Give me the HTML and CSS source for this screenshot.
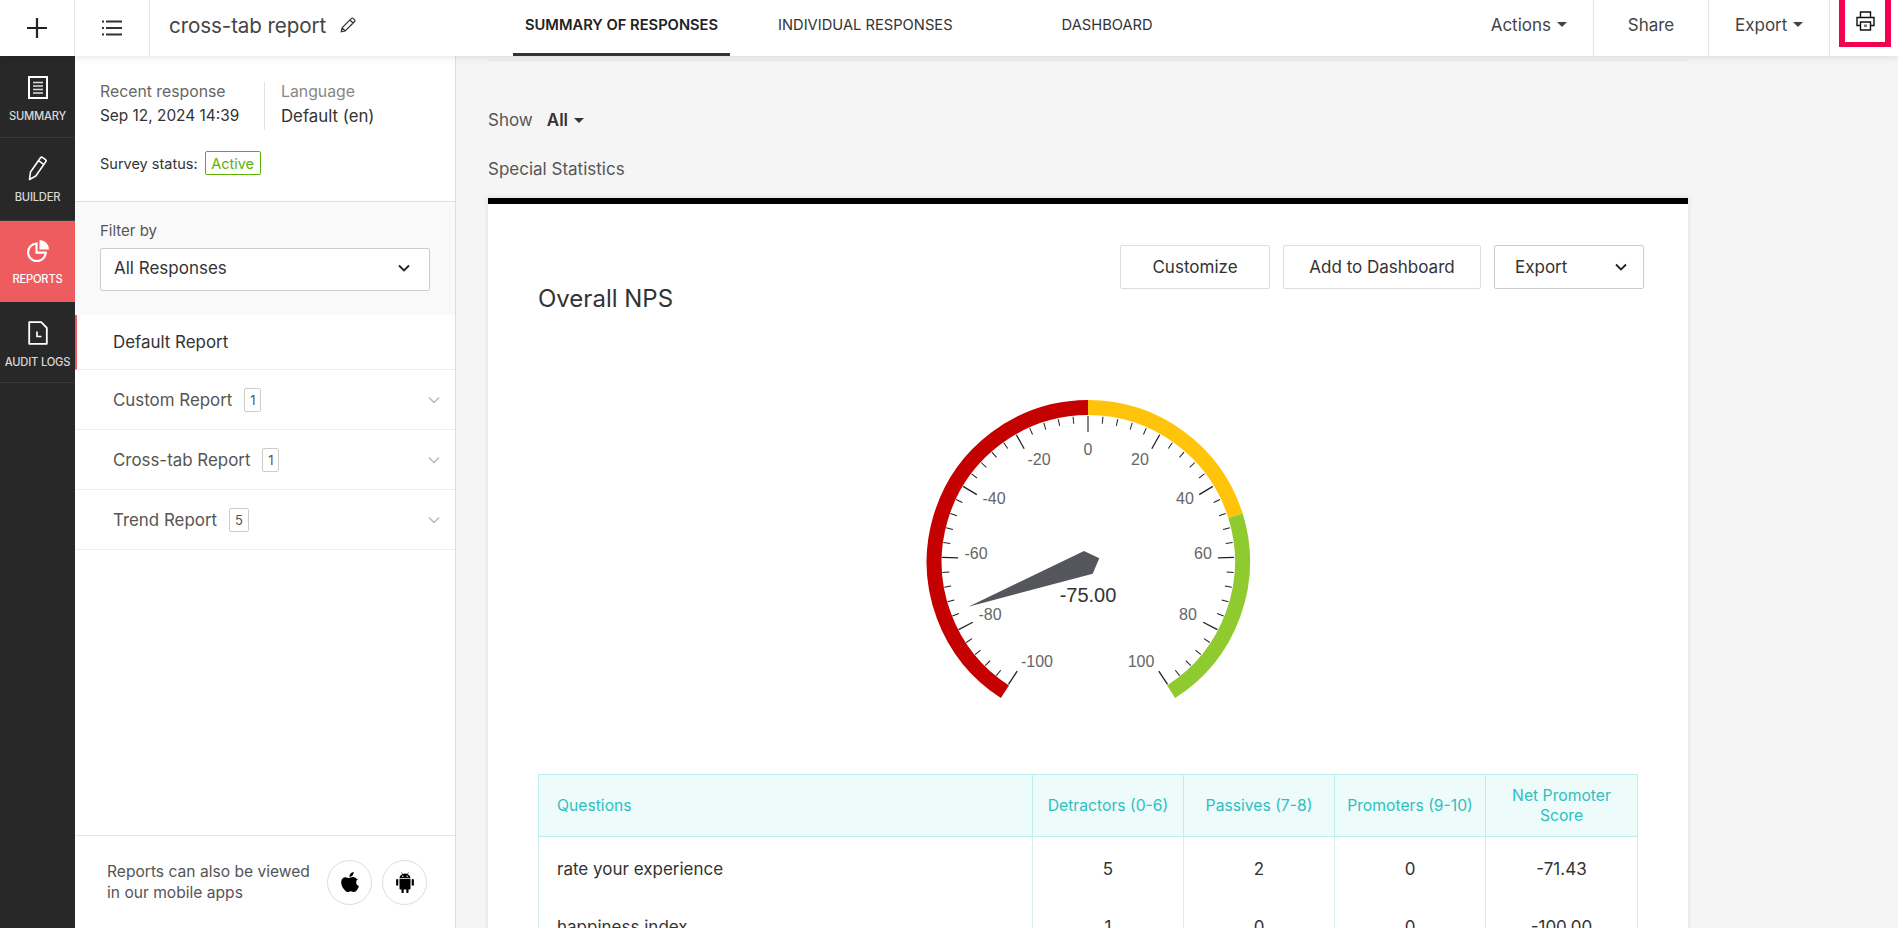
FILE: index.html
```html
<!DOCTYPE html>
<html lang="en">
<head>
<meta charset="utf-8">
<title>cross-tab report</title>
<link rel="stylesheet" href="styles.css">
</head>
<body>
<header class="topbar">
  <div class="top-cell"><svg class="ico" width="22" height="22" viewBox="0 0 22 22"><path d="M11 1v20M1 11h20" stroke="#222" stroke-width="2.2" fill="none"/></svg></div>
  <div class="top-cell"><svg class="ico" width="22" height="18" viewBox="0 0 22 18"><path d="M5 2.5h16M5 9h16M5 15.5h16" stroke="#333" stroke-width="2" fill="none"/><path d="M1 1.5h2v2H1zM1 8h2v2H1zM1 14.5h2v2H1z" fill="#333"/></svg></div>
  <div class="title-wrap">
    <span class="title">cross-tab report</span>
    <svg class="ico" width="16" height="16" viewBox="0 0 16 16"><path d="M1.2 14.8l.9-4L11.5 1.4a1.2 1.2 0 0 1 1.7 0l1.4 1.4a1.2 1.2 0 0 1 0 1.7L5.200 13.900zM2.100 10.800l3.100 3.100M10 3l3 3" stroke="#333" stroke-width="1.2" fill="none"/></svg>
  </div>
  <nav class="tabs">
    <a class="tab tab-active">SUMMARY OF RESPONSES</a>
    <a class="tab tab-individual">INDIVIDUAL RESPONSES</a>
    <a class="tab tab-dashboard">DASHBOARD</a>
  </nav>
  <div class="actions">
    <div class="act act-actions">Actions<i class="caret"></i></div>
    <div class="act act-share">Share</div>
    <div class="act act-export">Export<i class="caret"></i></div>
    <div class="act-print">
      <div class="print-box">
        <svg width="19" height="20" viewBox="0 0 19 20"><path d="M4.500 6.500V1h10v5.500M1 6.500h17M4.500 14.500H1v-8h17v8h-3.500" stroke="#111" stroke-width="1.400" fill="none"/><path d="M4.500 11h10v8h-10z" stroke="#111" stroke-width="1.400" fill="#fff"/><path d="M8 13.500h3v2.500H8z" fill="#777"/></svg>
      </div>
    </div>
  </div>
</header>

<div class="body-row">
  <aside class="rail">
    <div class="rail-item rail-summary">
      <svg width="20" height="23" viewBox="0 0 20 23"><path d="M1 1h18v21H1z" stroke="#fff" stroke-width="2" fill="none"/><path d="M5 6.500h10M5 10h10M5 13.500h10M5 17h10" stroke="#ddd" stroke-width="1.400"/></svg>
      <span>SUMMARY</span>
    </div>
    <div class="rail-item rail-builder">
      <svg width="20" height="25" viewBox="0 0 20 25"><path d="M1.500 23.500l1-7.500L12.500 1.800a1.500 1.500 0 0 1 2-.3l3 2.100a1.500 1.500 0 0 1 .3 2L7.800 20zM10.800 4.800l5.300 3.800" stroke="#fff" stroke-width="1.600" fill="none" stroke-linejoin="round"/></svg>
      <span>BUILDER</span>
    </div>
    <div class="rail-item rail-active">
      <svg width="22" height="22" viewBox="0 0 22 22"><path d="M9.500 3.500a8.800 8.800 0 1 0 9.200 9.200H9.500z" stroke="#fff" stroke-width="2.200" fill="none"/><path d="M12.500 0a9.500 9.500 0 0 1 9.500 9.500h-9.500z" fill="#fff"/></svg>
      <span>REPORTS</span>
    </div>
    <div class="rail-item rail-audit">
      <svg width="20" height="24" viewBox="0 0 20 24"><path d="M1.200 1.200h12l5.600 5.600v16h-17.600z" stroke="#fff" stroke-width="1.800" fill="none" stroke-linejoin="round"/><path d="M9 10.500v5h4.500" stroke="#fff" stroke-width="1.700" fill="none"/></svg>
      <span>AUDIT LOGS</span>
    </div>
  </aside>

  <aside class="panel">
    <div class="meta">
      <div class="meta-row">
        <div class="meta-col meta-col-a"><div class="meta-k">Recent response</div><div class="meta-v">Sep 12, 2024 14:39</div></div>
        <div class="meta-col meta-col-b"><div class="meta-k meta-k-light">Language</div><div class="meta-v meta-v-big">Default (en)</div></div>
      </div>
      <div class="status"><span>Survey status:</span><span class="badge-active">Active</span></div>
    </div>
    <div class="filter">
      <div class="filter-label">Filter by</div>
      <div class="select"><span>All Responses</span><svg width="12" height="8" viewBox="0 0 12 8"><path d="M1 1.500l5 5 5-5" stroke="#222" stroke-width="1.800" fill="none"/></svg></div>
    </div>
    <div class="report report-default">Default Report</div>
    <div class="report"><span>Custom Report</span><span class="count">1</span><svg class="chev" width="12" height="8" viewBox="0 0 12 8"><path d="M1 1.500l5 5 5-5" stroke="#b4b9b9" stroke-width="1.400" fill="none"/></svg></div>
    <div class="report"><span>Cross-tab Report</span><span class="count">1</span><svg class="chev" width="12" height="8" viewBox="0 0 12 8"><path d="M1 1.500l5 5 5-5" stroke="#b4b9b9" stroke-width="1.400" fill="none"/></svg></div>
    <div class="report"><span>Trend Report</span><span class="count count-wide">5</span><svg class="chev" width="12" height="8" viewBox="0 0 12 8"><path d="M1 1.500l5 5 5-5" stroke="#b4b9b9" stroke-width="1.400" fill="none"/></svg></div>
    <div class="apps">
      <p class="apps-text">Reports can also be viewed<br>in our mobile apps</p>
      <div class="app-circle"><svg width="18" height="20" viewBox="0 0 18 20"><path d="M12.600 0c.1 1.300-.4 2.500-1.100 3.400-.8.900-2 1.500-3.100 1.400-.1-1.200.5-2.500 1.200-3.300C10.300.7 11.600.1 12.600 0zM17.400 6.700c-1.600 1-2.300 2.200-2.200 3.700.1 1.800 1 3 2.800 3.700-.5 1.400-1.100 2.700-2 3.900-.8 1.100-1.700 2-2.900 2-1.200 0-1.800-.8-3.300-.8s-2.100.8-3.300.8c-1.300 0-2.300-1-3.100-2.200C1.300 15.600.2 12.700.2 10.200c0-3.200 2.100-5 4.300-5 1.300 0 2.500.9 3.400.9.800 0 2.200-1 3.700-1 1.500 0 3 .6 4 1.900z" fill="#000"/></svg></div>
      <div class="app-circle"><svg width="18" height="21" viewBox="0 0 18 21"><path d="M3.500 7h11v9.500a1 1 0 0 1-1 1h-1V20a1 1 0 0 1-2.200 0v-2.500H7.700V20a1 1 0 0 1-2.200 0v-2.500h-1a1 1 0 0 1-1-1zM1.200 7a1.100 1.100 0 0 1 1.100 1.100v4.600a1.100 1.100 0 0 1-2.200 0V8.100A1.100 1.100 0 0 1 1.200 7zM16.800 7a1.100 1.100 0 0 1 1.100 1.100v4.600a1.100 1.100 0 0 1-2.200 0V8.100A1.100 1.100 0 0 1 16.800 7zM3.500 6.300C3.600 4.400 4.700 2.900 6.300 2.200L5.300.600l.4-.3 1.100 1.700a6 6 0 0 1 4.400 0L12.300.300l.4.3-1 1.600c1.600.7 2.700 2.200 2.800 4.100z" fill="#000"/><circle cx="6.800" cy="4.300" r=".7" fill="#fff"/><circle cx="11.200" cy="4.300" r=".7" fill="#fff"/></svg></div>
    </div>
  </aside>

  <main class="main">
    <div class="edge"></div>
    <div class="show"><span class="show-k">Show</span><span class="show-v">All</span><i class="caret"></i></div>
    <div class="section-title">Special Statistics</div>
    <section class="card">
      <div class="card-head">
        <h2 class="card-title">Overall NPS</h2>
        <div class="btns">
          <div class="btn btn-custom">Customize</div>
          <div class="btn btn-dash">Add to Dashboard</div>
          <div class="btn btn-export"><span>Export</span><svg width="12" height="8" viewBox="0 0 12 8"><path d="M1 1.500l5 5 5-5" stroke="#222" stroke-width="1.800" fill="none"/></svg></div>
        </div>
      </div>
      <svg class="gauge" width="340" height="310" viewBox="-170 -170 340 310">
        <defs>
          <path id="tm" d="M0-146v7" stroke="#222" stroke-width="1"/>
          <path id="tj" d="M0-146v16" stroke="#222" stroke-width="1.300"/>
        </defs>
        <path d="M-83.100 129.800A154.500 154.500 0 0 1 0-154.500" stroke="#c40000" stroke-width="15" fill="none"/>
        <path d="M0-154.500A154.500 154.500 0 0 1 147.500-46.200" stroke="#ffc40a" stroke-width="15" fill="none"/>
        <path d="M147.500-46.200A154.500 154.500 0 0 1 83.100 129.800" stroke="#8fca2e" stroke-width="15" fill="none"/>
        <use href="#tj" transform="rotate(-147)"/><use href="#tm" transform="rotate(-141.120)"/><use href="#tm" transform="rotate(-135.240)"/><use href="#tm" transform="rotate(-129.360)"/><use href="#tm" transform="rotate(-123.480)"/>
        <use href="#tj" transform="rotate(-117.600)"/><use href="#tm" transform="rotate(-111.720)"/><use href="#tm" transform="rotate(-105.840)"/><use href="#tm" transform="rotate(-99.960)"/><use href="#tm" transform="rotate(-94.080)"/>
        <use href="#tj" transform="rotate(-88.200)"/><use href="#tm" transform="rotate(-82.320)"/><use href="#tm" transform="rotate(-76.440)"/><use href="#tm" transform="rotate(-70.560)"/><use href="#tm" transform="rotate(-64.680)"/>
        <use href="#tj" transform="rotate(-58.800)"/><use href="#tm" transform="rotate(-52.920)"/><use href="#tm" transform="rotate(-47.040)"/><use href="#tm" transform="rotate(-41.160)"/><use href="#tm" transform="rotate(-35.280)"/>
        <use href="#tj" transform="rotate(-29.400)"/><use href="#tm" transform="rotate(-23.520)"/><use href="#tm" transform="rotate(-17.640)"/><use href="#tm" transform="rotate(-11.760)"/><use href="#tm" transform="rotate(-5.880)"/>
        <path d="M0-146v16" stroke="#666" stroke-width="1.600"/>
        <use href="#tm" transform="rotate(5.880)"/><use href="#tm" transform="rotate(11.760)"/><use href="#tm" transform="rotate(17.640)"/><use href="#tm" transform="rotate(23.520)"/><use href="#tj" transform="rotate(29.400)"/>
        <use href="#tm" transform="rotate(35.280)"/><use href="#tm" transform="rotate(41.160)"/><use href="#tm" transform="rotate(47.040)"/><use href="#tm" transform="rotate(52.920)"/><use href="#tj" transform="rotate(58.800)"/>
        <use href="#tm" transform="rotate(64.680)"/><use href="#tm" transform="rotate(70.560)"/><use href="#tm" transform="rotate(76.440)"/><use href="#tm" transform="rotate(82.320)"/><use href="#tj" transform="rotate(88.200)"/>
        <use href="#tm" transform="rotate(94.080)"/><use href="#tm" transform="rotate(99.960)"/><use href="#tm" transform="rotate(105.840)"/><use href="#tm" transform="rotate(111.720)"/><use href="#tj" transform="rotate(117.600)"/>
        <use href="#tm" transform="rotate(123.480)"/><use href="#tm" transform="rotate(129.360)"/><use href="#tm" transform="rotate(135.240)"/><use href="#tm" transform="rotate(141.120)"/><use href="#tj" transform="rotate(147)"/>
        <g class="g-lab">
          <text x="-49" y="-97">-20</text><text x="0" y="-107">0</text><text x="52" y="-97">20</text>
          <text x="-94" y="-58">-40</text><text x="97" y="-58">40</text>
          <text x="-112" y="-3">-60</text><text x="115" y="-3">60</text>
          <text x="-98" y="58">-80</text><text x="100" y="58">80</text>
          <text x="-51" y="105">-100</text><text x="53" y="105">100</text>
        </g>
        <polygon points="-119.700,44.700 -4,-11 11.300,-3.700 4.700,11.700" fill="#55565b"/>
        <text class="g-val" x="0" y="40">-75.00</text>
      </svg>
      <table class="nps">
        <colgroup><col class="c-q"><col class="c-n"><col class="c-n"><col class="c-n"><col class="c-s"></colgroup>
        <thead>
          <tr><th class="q">Questions</th><th>Detractors (0-6)</th><th>Passives (7-8)</th><th>Promoters (9-10)</th><th>Net Promoter<br>Score</th></tr>
        </thead>
        <tbody>
          <tr class="r1"><td class="q">rate your experience</td><td>5</td><td>2</td><td>0</td><td>-71.43</td></tr>
          <tr class="r2"><td class="q">happiness index</td><td>1</td><td>0</td><td>0</td><td>-100.00</td></tr>
          <tr class="r3"><td class="q"></td><td></td><td></td><td></td><td></td></tr>
        </tbody>
      </table>
    </section>
  </main>
</div>
</body>
</html>
```
FILE: styles.css
```css
* { box-sizing: border-box; }
html, body { margin: 0; height: 100%; overflow: hidden; }
body { font-family: Inter, "Noto Sans", sans-serif; color: #333; display: flex; flex-direction: column; background: #f5f5f5; }
.ico { display: block; flex: none; }

.topbar { height: 56px; flex: none; background: #fff; display: flex; align-items: stretch; box-shadow: 0 2px 7px rgba(0,0,0,.09); position: relative; z-index: 2; }
.top-cell { width: 75px; border-right: 1px solid #e8e8e8; display: flex; align-items: center; justify-content: center; padding-bottom: 1px; }
.title-wrap { width: 363px; padding-left: 19px; display: flex; align-items: center; gap: 14px; padding-bottom: 6px; }
.title { font-size: 20.600px; color: #444; letter-spacing: -.1px; }
.tabs { display: flex; align-items: stretch; }
.tab { padding: 0 12px; font-size: 14.700px; line-height: 50px; color: #333; border-bottom: 3px solid transparent; }
.tab-active { font-weight: 600; border-bottom-color: #333; color: #222; }
.tab-individual { margin-left: 36px; }
.tab-dashboard { margin-left: 85px; }
.actions { margin-left: auto; display: flex; align-items: stretch; }
.act { display: flex; align-items: center; font-size: 17px; color: #444; border-right: 1px solid #e4e4e4; padding-bottom: 7px; }
.act-actions { padding-right: 26px; }
.act-share { width: 115px; justify-content: center; }
.act-export { width: 121px; padding-left: 26px; }
.caret { display: inline-block; width: 0; height: 0; border: 5px solid transparent; border-top-color: #444; border-bottom: 0; margin-left: 6px; }
.act-print { width: 68px; padding-left: 9px; }
.print-box { width: 52px; height: 47px; border: 6px solid #f5004f; border-top-width: 0; border-bottom-width: 5px; display: flex; align-items: center; justify-content: center; }

.body-row { flex: 1; display: flex; min-height: 0; }
.rail { width: 75px; flex: none; background: #282828; }
.rail-item { display: flex; flex-direction: column; align-items: center; border-bottom: 1px solid #3a3a3a; color: #d8d8d8; font-size: 11.200px; line-height: 14px; font-weight: 500; white-space: nowrap; letter-spacing: -.2px; }
.rail-summary { height: 82px; padding-top: 20px; gap: 10px; }
.rail-builder { height: 83px; padding-top: 18px; gap: 9px; }
.rail-active { height: 81px; padding-top: 19px; gap: 10px; background: #ee5c60; color: #fff; border-bottom: 0; }
.rail-audit { height: 81px; padding-top: 19px; gap: 10px; }

.panel { width: 381px; flex: none; background: #fff; border-right: 1px solid #ddd; display: flex; flex-direction: column; }
.meta { height: 146px; padding: 26px 0 0 25px; border-bottom: 1px solid #ddd; }
.meta-row { display: flex; }
.meta-col-a { width: 165px; border-right: 1px solid #e2e2e2; }
.meta-col-b { padding-left: 16px; }
.meta-k { font-size: 15.800px; color: #666; line-height: 20px; }
.meta-k-light { color: #888; }
.meta-v { font-size: 15.400px; color: #333; line-height: 28px; }
.meta-v-big { font-size: 16.800px; }
.status { margin-top: 21px; display: flex; align-items: center; gap: 7px; font-size: 14.500px; color: #333; }
.badge-active { border: 1px solid #59b300; color: #59b300; border-radius: 2px; height: 24px; width: 56px; display: flex; align-items: center; justify-content: center; }
.filter { height: 113px; background: #f9f9f9; padding: 19px 25px 0; }
.filter-label { font-size: 15px; color: #555; line-height: 20px; margin-bottom: 7px; }
.select { height: 43px; width: 330px; background: #fff; border: 1px solid #ccc; border-radius: 2px; padding: 0 19px 3px 13px; display: flex; align-items: center; justify-content: space-between; font-size: 17px; color: #333; }
.report { height: 60px; border-bottom: 1px solid #eee; padding: 0 15px 0 38px; display: flex; align-items: center; font-size: 16.900px; color: #555; }
.report-default { height: 55px; border-left: 2px solid #ee5c60; padding-left: 36px; color: #333; }
.count { margin-left: 12px; border: 1px solid #ccc; border-radius: 2px; font-size: 13px; min-width: 17px; height: 24px; display: flex; align-items: center; justify-content: center; padding: 0 3px; }
.count-wide { min-width: 20px; }
.chev { margin-left: auto; }
.apps { margin-top: auto; height: 93px; border-top: 1px solid #e6e6e6; display: flex; align-items: center; padding: 0 0 0 32px; }
.apps-text { margin: 0; font-size: 15.600px; line-height: 21px; color: #555; width: 220px; flex: none; }
.app-circle { width: 45px; height: 45px; border: 1px solid #ddd; border-radius: 50%; display: flex; align-items: center; justify-content: center; margin-right: 10px; flex: none; }

.main { flex: 1; min-width: 0; padding: 0 0 0 32px; }
.edge { height: 5px; background: #f2f2f2; border-bottom: 1px solid #ebebeb; width: 1200px; }
.show { margin-top: 49px; display: flex; align-items: center; font-size: 17px; line-height: 20px; color: #555; }
.show-v { margin-left: 14px; color: #333; font-weight: 600; }
.show .caret { margin-left: 6px; border-top-color: #333; }
.section-title { margin-top: 29px; font-size: 17px; line-height: 20px; color: #555; }
.card { width: 1200px; margin-top: 19px; background: #fff; border-top: 6px solid #000; box-shadow: 0 0 5px rgba(0,0,0,.1); padding: 0 50px; }
.card-head { display: flex; justify-content: space-between; height: 188px; padding-top: 41px; }
.card-title { margin: 39px 0 0; font-size: 24px; font-weight: 400; color: #333; line-height: 30px; }
.btns { display: flex; gap: 13px; margin-right: -6px; height: 44px; }
.btn { border: 1px solid #ddd; border-radius: 2px; display: flex; align-items: center; justify-content: center; font-size: 17px; color: #333; height: 44px; }
.btn-custom { width: 150px; }
.btn-dash { width: 198px; }
.btn-export { width: 150px; border-color: #ccc; justify-content: space-between; padding: 0 16px 0 20px; }
.gauge { display: block; margin: 0 auto; }
.g-lab text { font-family: "Liberation Sans", Arial, sans-serif; font-size: 16px; fill: #666; text-anchor: middle; }
.g-val { font-family: "Liberation Sans", Arial, sans-serif; font-size: 20px; fill: #333; text-anchor: middle; }
.nps { margin-top: 72px; width: 1099px; border-collapse: collapse; table-layout: fixed; font-size: 17px; }
.c-q { width: 494px; }
.c-n { width: 151px; }
.c-s { width: 152px; }
.nps th { height: 62px; background: #eefbfb; border: 1px solid #bfeced; color: #2fbfbf; font-weight: 400; font-size: 15.700px; line-height: 20px; text-align: center; padding: 0 2px; }
.nps td { border-left: 1px solid #d6f0f0; border-right: 1px solid #d6f0f0; text-align: center; color: #333; }
.nps .q { text-align: left; padding-left: 18px; }
.r1 td { height: 64px; }
.r2 td { height: 52px; }
.r3 td { height: 52px; }
```
